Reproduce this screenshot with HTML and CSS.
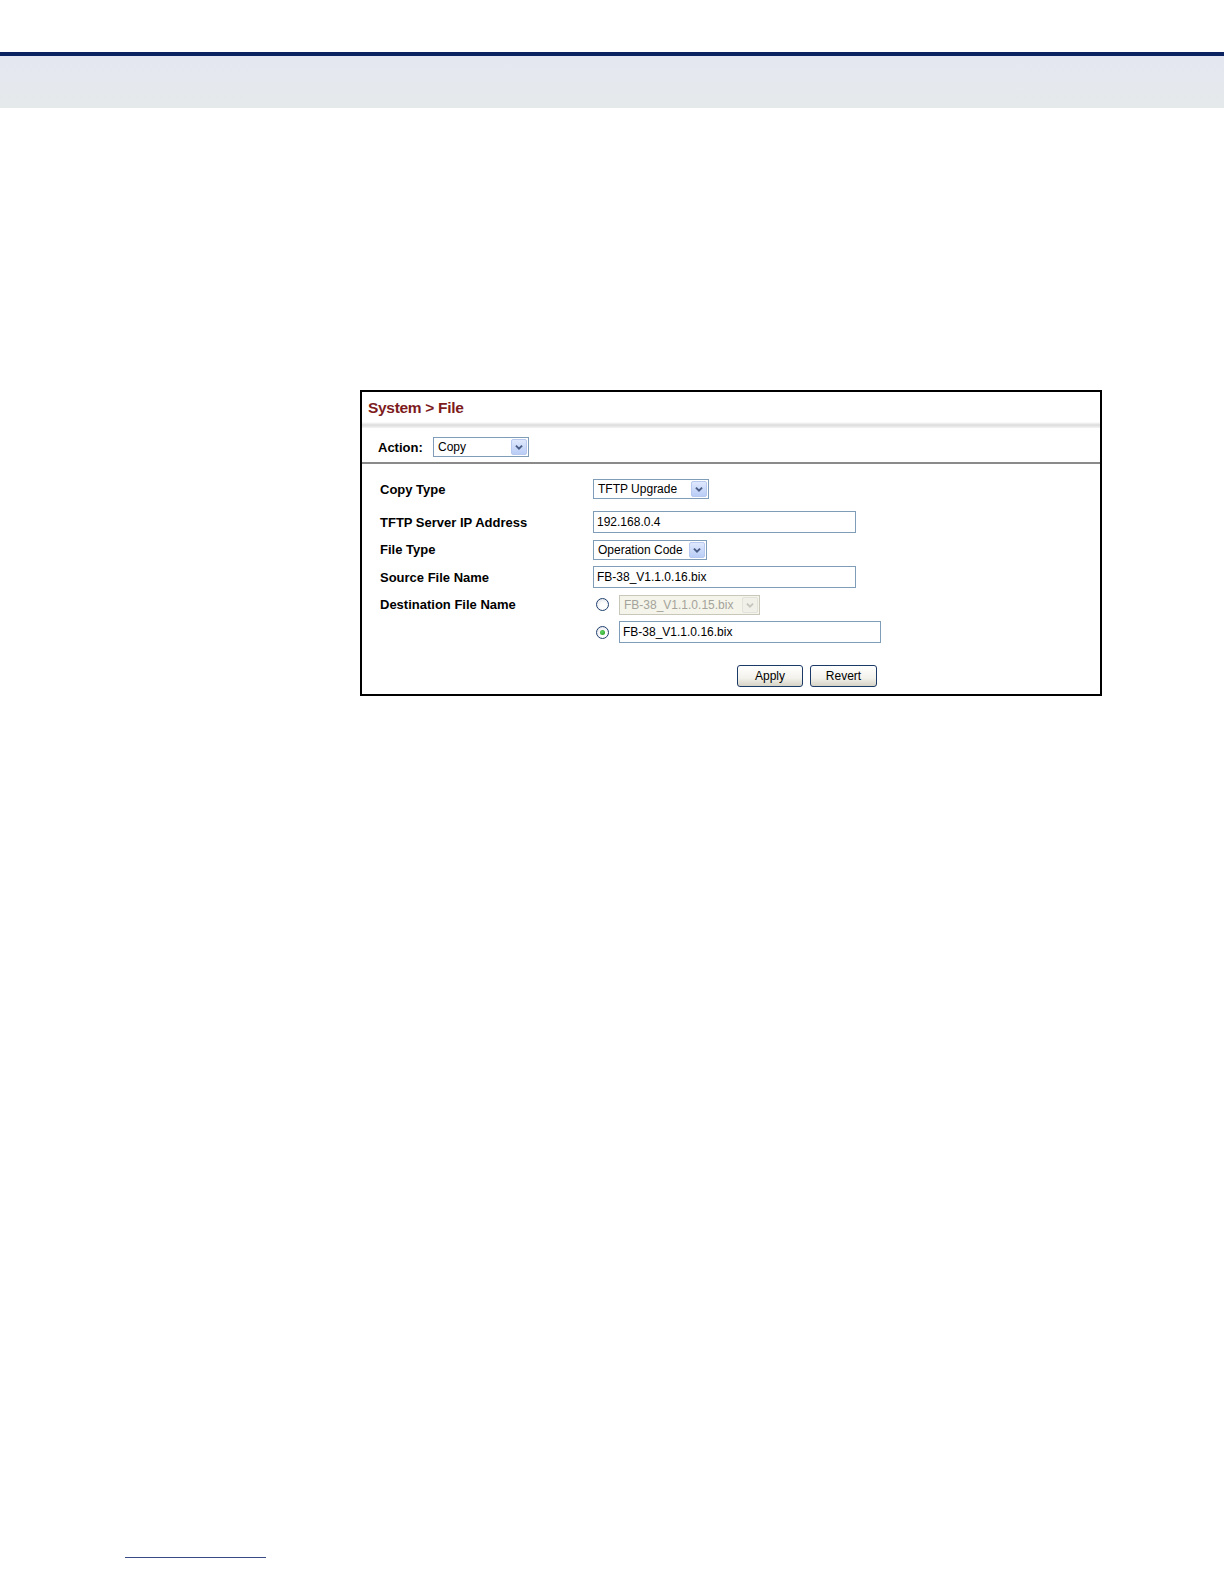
FILE: index.html
```html
<!DOCTYPE html>
<html>
<head>
<meta charset="utf-8">
<link rel="stylesheet" href="styles.css">
</head>
<body>
<header class="page-head">
  <div class="head-rule"></div>
  <div class="head-band"></div>
</header>
<main class="page-main">
  <section class="shot">
    <div class="shot-title">System &gt; File</div>
    <div class="shot-shade"></div>
    <div class="action-row">
      <span class="action-label">Action:</span>
      <div class="sel sel-action"><span class="sel-text">Copy</span><span class="sel-btn"><svg viewBox="0 0 16 16" width="16" height="16"><path d="M4.5 6.5 L8 10 L11.5 6.5" fill="none" stroke="#4a5d86" stroke-width="2.2"/></svg></span></div>
    </div>
    <div class="form">
      <div class="row">
        <span class="lbl">Copy Type</span>
        <div class="sel sel-copy"><span class="sel-text">TFTP Upgrade</span><span class="sel-btn"><svg viewBox="0 0 16 16" width="16" height="16"><path d="M4.5 6.5 L8 10 L11.5 6.5" fill="none" stroke="#4a5d86" stroke-width="2.2"/></svg></span></div>
      </div>
      <div class="row row-ip">
        <span class="lbl">TFTP Server IP Address</span>
        <div class="inp inp-wide">192.168.0.4</div>
      </div>
      <div class="row">
        <span class="lbl">File Type</span>
        <div class="sel sel-file"><span class="sel-text">Operation Code</span><span class="sel-btn"><svg viewBox="0 0 16 16" width="16" height="16"><path d="M4.5 6.5 L8 10 L11.5 6.5" fill="none" stroke="#4a5d86" stroke-width="2.2"/></svg></span></div>
      </div>
      <div class="row">
        <span class="lbl">Source File Name</span>
        <div class="inp inp-wide">FB-38_V1.1.0.16.bix</div>
      </div>
      <div class="row">
        <span class="lbl">Destination File Name</span>
        <div class="radio-group">
          <span class="radio"></span>
          <div class="sel sel-dis"><span class="sel-text">FB-38_V1.1.0.15.bix</span><span class="sel-btn"><svg viewBox="0 0 16 16" width="16" height="16"><path d="M4.5 6.5 L8 10 L11.5 6.5" fill="none" stroke="#c6c6c0" stroke-width="2.2"/></svg></span></div>
        </div>
      </div>
      <div class="row">
        <span class="lbl"></span>
        <div class="radio-group">
          <span class="radio radio-on"></span>
          <div class="inp inp-dest">FB-38_V1.1.0.16.bix</div>
        </div>
      </div>
      <div class="row row-btns">
        <button class="btn btn-apply">Apply</button>
        <button class="btn btn-revert">Revert</button>
      </div>
    </div>
  </section>
</main>
<footer class="page-foot">
  <div class="foot-rule"></div>
</footer>
</body>
</html>
```

FILE: styles.css
```css
html, body {
  margin: 0;
  padding: 0;
  background: #ffffff;
}
body {
  width: 1224px;
  height: 1584px;
  position: relative;
  font-family: "Liberation Sans", Arial, sans-serif;
  color: #000;
}
.page-head {
  padding-top: 52px;
}
.head-rule {
  height: 4px;
  background: #0b2461;
}
.head-band {
  height: 52px;
  background: linear-gradient(#e4e7f1, #e6e9ea);
}
.page-main {
  padding-top: 282px;
  padding-left: 360px;
}
.shot {
  width: 738px;
  height: 302px;
  border: 2px solid #000;
  background: #fff;
  display: flex;
  flex-direction: column;
}
.shot-title {
  height: 30px;
  padding-left: 6px;
  padding-top: 2px;
  box-sizing: border-box;
  display: flex;
  align-items: center;
  font-size: 15.5px;
  font-weight: bold;
  color: #7d1b1d;
  letter-spacing: -0.3px;
}
.shot-shade {
  height: 6px;
  background: linear-gradient(#ffffff, #dcdcdc 50%, #f4f4f4);
}
.action-row {
  height: 36px;
  border-bottom: 2px solid #8a8a8a;
  box-sizing: border-box;
  display: flex;
  align-items: center;
  padding-left: 16px;
  padding-top: 4px;
}
.action-label {
  font-size: 13px;
  font-weight: bold;
  width: 55px;
}
.sel {
  height: 20px;
  box-sizing: border-box;
  border: 1px solid #7f9db9;
  background: #fff;
  display: flex;
  align-items: center;
  justify-content: space-between;
  padding-left: 4px;
  padding-right: 1px;
  font-size: 12px;
}
.sel-btn {
  width: 16px;
  height: 16px;
  box-sizing: border-box;
  border: 1px solid #b7c9ef;
  border-radius: 2px;
  background: linear-gradient(#dfe8fd, #b9cdf6);
  display: flex;
}
.sel-btn svg {
  width: 14px;
  height: 14px;
}
.sel-action { width: 96px; }
.sel-copy { width: 116px; }
.sel-file { width: 114px; }
.sel-dis {
  width: 141px;
  border-color: #c9c7ba;
  background: #f5f4ea;
  color: #a3a39b;
}
.sel-dis .sel-btn {
  border-color: #e3e2da;
  background: #f0efe8;
}
.form {
  display: flex;
  flex-direction: column;
  padding-top: 14px;
  padding-left: 18px;
  gap: 5.5px;
}
.row {
  height: 22px;
  display: flex;
  align-items: center;
}
.row-ip {
  margin-top: 5.5px;
}
.lbl {
  width: 213px;
  font-size: 13px;
  font-weight: bold;
  flex: none;
}
.inp {
  height: 22px;
  box-sizing: border-box;
  border: 1px solid #7f9db9;
  display: flex;
  align-items: center;
  padding-left: 3px;
  font-size: 12px;
}
.inp-wide { width: 263px; }
.inp-dest { width: 262px; }
.radio-group {
  display: flex;
  align-items: center;
  gap: 10px;
  padding-left: 3px;
}
.radio {
  width: 13px;
  height: 13px;
  box-sizing: border-box;
  border-radius: 50%;
  border: 1px solid #1f3f6e;
  background: radial-gradient(circle at 60% 65%, #ffffff 30%, #dcdfe4 100%);
  display: flex;
  align-items: center;
  justify-content: center;
}
.radio-on::after {
  content: "";
  width: 5px;
  height: 5px;
  border-radius: 50%;
  background: radial-gradient(circle at 40% 40%, #62d562, #1c9a1c);
}
.row-btns {
  margin-top: 16.5px;
  padding-left: 357px;
  gap: 7px;
}
.btn {
  height: 22px;
  box-sizing: border-box;
  border: 1px solid #1c3a66;
  border-radius: 3px;
  background: linear-gradient(#ffffff, #f3f2ec 60%, #d6d3c6);
  font-family: "Liberation Sans", Arial, sans-serif;
  font-size: 12px;
  color: #000;
  padding: 0;
}
.btn-apply { width: 66px; }
.btn-revert { width: 67px; }
.page-foot {
  position: absolute;
  left: 125px;
  top: 1557px;
}
.foot-rule {
  width: 141px;
  height: 1px;
  background: #3a4a86;
}
```
